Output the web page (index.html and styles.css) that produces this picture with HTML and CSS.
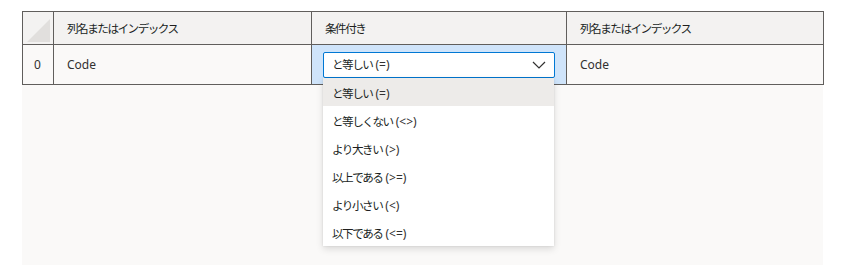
FILE: index.html
```html
<!DOCTYPE html>
<html lang="ja">
<head>
<meta charset="utf-8">
<link rel="stylesheet" href="styles.css">
</head>
<body>
<div class="wrap">
  <table class="grid">
    <colgroup>
      <col class="c0"><col class="c1"><col class="c2"><col class="c3">
    </colgroup>
    <thead>
      <tr>
        <th class="corner"><span class="tri"></span></th>
        <th><span class="ja">列名またはインデックス</span></th>
        <th><span class="ja">条件付き</span></th>
        <th><span class="ja">列名またはインデックス</span></th>
      </tr>
    </thead>
    <tbody>
      <tr>
        <td class="idx">0</td>
        <td>Code</td>
        <td class="sel">
          <div class="dd">
            <span><span class="ja">と等しい</span> (=)</span>
            <svg class="chev" width="14" height="8" viewBox="0 0 14 8"><path d="M1 1 L7 7 L13 1" fill="none" stroke="#323130" stroke-width="1.2"/></svg>
          </div>
        </td>
        <td>Code</td>
      </tr>
    </tbody>
  </table>
  <div class="below"></div>
  <ul class="menu">
    <li class="hi"><span class="ja">と等しい</span> (=)</li>
    <li><span class="ja">と等しくない</span> (&lt;&gt;)</li>
    <li><span class="ja">より大きい</span> (&gt;)</li>
    <li><span class="ja">以上である</span> (&gt;=)</li>
    <li><span class="ja">より小さい</span> (&lt;)</li>
    <li><span class="ja">以下である</span> (&lt;=)</li>
  </ul>
</div>
</body>
</html>
```

FILE: styles.css
```css
html, body { margin: 0; padding: 0; background: #ffffff; }
body {
  font-family: "Segoe UI", "Noto Sans", "Noto Sans CJK JP", sans-serif;
  font-size: 12px;
  color: #323130;
}
.ja {
  font-family: "Noto Sans CJK JP", sans-serif;
  font-size: 11.6px;
  letter-spacing: -1.5px;
  color: #201f1e;
}
.wrap {
  position: relative;
  padding: 11px 20px 0 22px;
  width: 801px;
}
.grid {
  border-collapse: collapse;
  width: 801px;
  table-layout: fixed;
}
.c0 { width: 31px; }
.c1 { width: 258px; }
.c2 { width: 255px; }
.c3 { width: 257px; }
.grid th, .grid td {
  border: 1px solid #605e5c;
  text-align: left;
  font-weight: normal;
  padding: 0 0 0 13px;
  white-space: nowrap;
}
.grid th {
  background: #f3f2f1;
  height: 31px;
  padding-top: 1px;
}
.grid td {
  background: #faf9f8;
  height: 39px;
}
.grid th.corner { padding: 0; position: relative; }
.tri {
  display: block;
  width: 0; height: 0;
  margin: 4px 0 0 4px;
  border-left: 23px solid transparent;
  border-bottom: 23px solid #e1dfdd;
}
.grid td.idx { padding: 0 0 0 11px; }
.grid td.sel {
  background: #cfe4fa;
  padding: 0 11px 0 11px;
}
.dd {
  height: 24px;
  border: 1px solid #0078d4;
  border-radius: 2px;
  background: #ffffff;
  display: flex;
  align-items: center;
  justify-content: space-between;
  padding: 0 8px 0 8px;
}
.below {
  height: 181px;
  background: #faf9f8;
}
.menu {
  position: absolute;
  left: 323px;
  top: 78px;
  width: 231px;
  margin: 0;
  padding: 0;
  list-style: none;
  background: #ffffff;
  box-shadow: 0 3px 7px rgba(0,0,0,0.13), 0 0 2px rgba(0,0,0,0.1);
}
.menu li {
  box-sizing: border-box;
  height: 28px;
  line-height: 24px;
  padding: 3px 0 0 9px;
}
.menu li.hi { background: #edebe9; }
```
